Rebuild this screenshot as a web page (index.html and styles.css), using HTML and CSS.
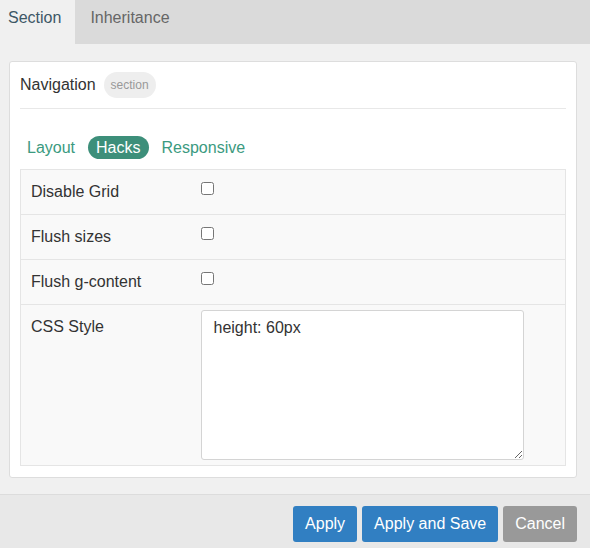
FILE: index.html
```html
<!DOCTYPE html>
<html>
<head>
  <title>Section settings</title>
  <link rel="stylesheet" href="styles.css">
</head>
<body>
  <div class="tabs">
    <div class="tab active">Section</div>
    <div class="tab">Inheritance</div>
  </div>

  <div class="content">
    <div class="panel">
      <div class="panel-header">
        <span class="panel-title">Navigation</span>
        <span class="badge">section</span>
      </div>

      <div class="pills">
        <a class="pill">Layout</a>
        <a class="pill active">Hacks</a>
        <a class="pill">Responsive</a>
      </div>

      <table class="props">
        <tr>
          <td class="label">Disable Grid</td>
          <td class="value"><input type="checkbox"></td>
        </tr>
        <tr>
          <td class="label">Flush sizes</td>
          <td class="value"><input type="checkbox"></td>
        </tr>
        <tr>
          <td class="label">Flush g-content</td>
          <td class="value"><input type="checkbox"></td>
        </tr>
        <tr>
          <td class="label">CSS Style</td>
          <td class="value value-area"><textarea>height: 60px</textarea></td>
        </tr>
      </table>
    </div>
  </div>

  <div class="footer">
    <button class="btn btn-primary">Apply</button>
    <button class="btn btn-primary">Apply and Save</button>
    <button class="btn btn-default">Cancel</button>
  </div>
</body>
</html>
```

FILE: styles.css
```css
body {
  margin: 0;
  font-family: "Liberation Sans", Arial, sans-serif;
  font-size: 16px;
  color: #333;
  background-color: #f0f0f0;
}

/* Top tabs */
.tabs {
  display: flex;
  height: 44px;
  background-color: #dadada;
}

.tab {
  padding: 0 15px 0 15px;
  line-height: 36px;
  color: #666;
}

.tab.active {
  background-color: #f0f0f0;
  color: #3d5766;
  padding: 0 14px 0 8px;
}

.content {
  padding: 17px 13px 16px 9px;
}

.panel {
  background-color: #fff;
  border: 1px solid #ddd;
  border-radius: 3px;
  padding: 10px 10px 11px 10px;
}

.panel-header {
  display: flex;
  align-items: center;
  gap: 8px;
  padding-bottom: 10px;
  border-bottom: 1px solid #e8e8e8;
  height: 26px;
}

.badge {
  background-color: #eee;
  color: #999;
  font-size: 12px;
  border-radius: 13px;
  padding: 6px 7px;
}

/* Sub tabs */
.pills {
  display: flex;
  align-items: center;
  gap: 8px;
  padding: 27px 0 10px 2px;
}

.pill {
  color: #3b9a80;
  padding: 2px 5px;
  line-height: 19px;
  border-radius: 12px;
  cursor: pointer;
}

.pill.active {
  background-color: #3d8f7a;
  color: #fff;
  padding: 2px 8px;
}

/* Property table */
.props {
  width: 100%;
  border-collapse: collapse;
  background-color: #f9f9f9;
  border: 1px solid #e5e5e5;
}

.props td {
  border-top: 1px solid #e5e5e5;
  vertical-align: top;
  height: 45px;
  box-sizing: border-box;
}

.label {
  width: 170px;
  padding: 13px 10px 0 10px;
}

.value {
  padding: 11px 10px 0 10px;
}

.value input[type="checkbox"] {
  margin: 0;
  width: 13px;
  height: 13px;
}

.value-area {
  padding: 5px 10px 5px 10px;
}

textarea {
  display: block;
  width: 323px;
  height: 150px;
  box-sizing: border-box;
  padding: 8px 12px;
  border: 1px solid #d4d4d4;
  border-radius: 3px;
  font-family: "Liberation Sans", Arial, sans-serif;
  font-size: 16px;
  color: #333;
  resize: vertical;
}

/* Bottom buttons */
.footer {
  display: flex;
  justify-content: flex-end;
  gap: 5px;
  border-top: 1px solid #dcdcdc;
  background-color: #e8e8e8;
  padding: 11px 13px 7px 0;
}

.btn {
  height: 36px;
  border: none;
  border-radius: 3px;
  color: #fff;
  font-family: "Liberation Sans", Arial, sans-serif;
  font-size: 16px;
  padding: 0 12px;
  cursor: pointer;
}

.btn-primary {
  background-color: #317fc2;
}

.btn-default {
  background-color: #999;
}
```
